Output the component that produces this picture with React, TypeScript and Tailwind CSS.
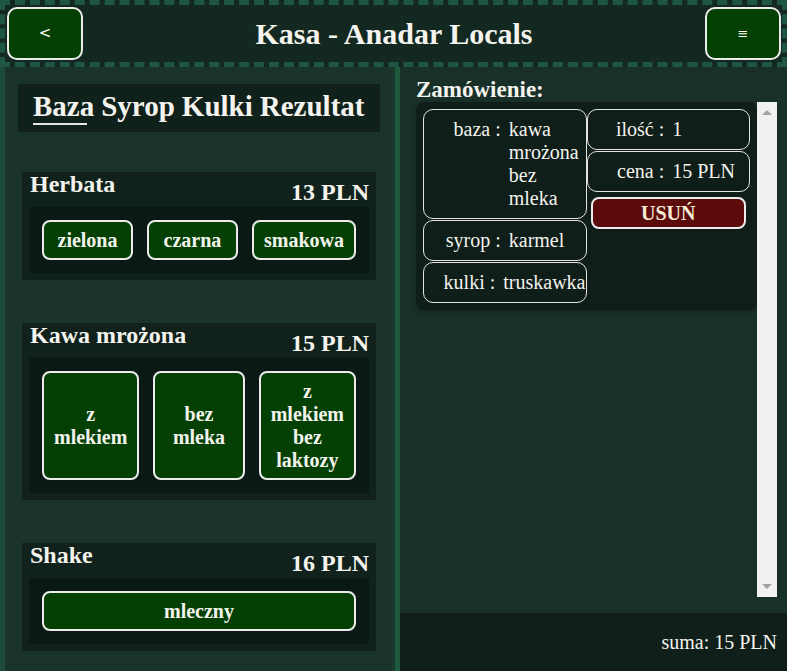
import React from "react";

const serif = "font-['Liberation_Serif','Times_New_Roman',serif]";

interface Product {
  name: string;
  price: string;
  options: string[];
}

const products: Product[] = [
  { name: "Herbata", price: "13 PLN", options: ["zielona", "czarna", "smakowa"] },
  { name: "Kawa mrożona", price: "15 PLN", options: ["z mlekiem", "bez mleka", "z mlekiem bez laktozy"] },
  { name: "Shake", price: "16 PLN", options: ["mleczny"] },
];

const tabs = ["Baza", "Syrop", "Kulki", "Rezultat"];

function ProductCard({ product }: { product: Product }) {
  return (
    <div className="bg-[#10221b] px-[7px] pb-[7px]">
      <div className="flex h-[35px] items-start justify-between">
        <h3 className="ml-px text-[24px] font-bold leading-none">{product.name}</h3>
        <p className="mt-[8px] text-[24px] font-bold leading-none">{product.price}</p>
      </div>
      <div className="flex gap-[14px] bg-[#0a1913] px-[13px] py-[13px]">
        {product.options.map((o) => (
          <button
            key={o}
            className="flex flex-1 basis-0 items-center justify-center rounded-[8px] border-2 border-[#ececec] bg-[#044004] px-[10px] py-[6.5px] text-center text-[20px] font-bold leading-[23px] text-[#f3f3ee]"
          >
            {o}
          </button>
        ))}
      </div>
    </div>
  );
}

function OrderItem({ label, value }: { label: string; value: string }) {
  return (
    <div className="flex rounded-[10px] border border-[#e4e4e4] py-[8px] text-[20px] leading-[23px]">
      <span className="flex-1 basis-0 whitespace-nowrap pr-[4px] text-right">{label} :</span>
      <span className="flex-1 basis-0 pl-[4px] text-left">{value}</span>
    </div>
  );
}

function ScrollArrow({ down }: { down?: boolean }) {
  return (
    <svg width="10" height="6" viewBox="0 0 10 6" className="mx-auto">
      <polygon points={down ? "0,0 10,0 5,5" : "0,6 10,6 5,1"} fill="#a3a3a3" />
    </svg>
  );
}

export default function App() {
  return (
    <div className={`flex h-screen w-full flex-col overflow-hidden bg-[#183028] text-[#f4f3ee] ${serif}`}>
      {/* Header */}
      <header className="flex h-[67px] shrink-0 items-center justify-between border-[5px] border-dashed border-[#1f5643] bg-[#132820] pl-[2px] pr-px">
        <button className="flex h-[53px] w-[76px] items-center justify-center rounded-[10px] border-2 border-[#ececec] bg-[#044004] font-['DejaVu_Sans',sans-serif] text-[15px] text-white">
          &lt;
        </button>
        <h1 className="text-[30px] font-bold">Kasa - Anadar Locals</h1>
        <button className="flex h-[53px] w-[76px] items-center justify-center rounded-[10px] border-2 border-[#ececec] bg-[#044004] font-['DejaVu_Sans',sans-serif] text-[13px] text-white">
          ≡
        </button>
      </header>

      <main className="flex min-h-0 flex-1">
        {/* Left: product picker */}
        <section className="w-[400px] shrink-0 overflow-hidden border-l-[5px] border-r-[5px] border-l-[#1d4a3a] border-r-[#21593f] bg-[#1a342a] pt-[17px] shadow-[inset_-3px_0_0_#1a3a2e]">
          <nav className="ml-[13px] w-[362px] bg-[#10211b] pb-[7px] pl-[15px] pt-[7.5px]">
            <div className="flex items-start gap-[7px]">
              {tabs.map((t, i) => (
                <div key={t} className="flex flex-col">
                  <span className="text-[29px] font-bold leading-none">{t}</span>
                  {i === 0 ? (
                    <span className="mt-[2.5px] h-[2px] w-[54px] bg-[#e6e6e6]" />
                  ) : (
                    <span className="mt-[2.5px] h-[2px]" />
                  )}
                </div>
              ))}
            </div>
          </nav>

          <div className="ml-[17px] mr-[19px] mt-[40px] flex flex-col gap-[43px]">
            {products.map((p) => (
              <ProductCard key={p.name} product={p} />
            ))}
          </div>
        </section>

        {/* Right: order */}
        <section className="flex min-w-0 flex-1 flex-col">
          <div className="flex min-h-0 flex-1 flex-col pl-[16px] pr-[10px] pt-[11px]">
            <h2 className="text-[23px] font-bold leading-none">Zamówienie:</h2>
            <div className="mb-[16px] mt-[1px] flex min-h-0 flex-1">
              <div className="flex-1">
                <div className="grid grid-cols-2 rounded-[8px] bg-[#0f1e19] p-[7px] shadow-[0_2px_4px_rgba(0,0,0,0.25)]">
                  <div className="flex flex-col gap-[1px]">
                    <OrderItem label="baza" value="kawa mrożona bez mleka" />
                    <OrderItem label="syrop" value="karmel" />
                    <OrderItem label="kulki" value="truskawka" />
                  </div>
                  <div className="flex flex-col gap-[1px]">
                    <OrderItem label="ilość" value="1" />
                    <OrderItem label="cena" value="15 PLN" />
                    <button className="mx-[4px] mt-[4px] rounded-[8px] border-2 border-[#ececec] bg-[#5c0b0b] py-[2.5px] text-[20px] font-bold leading-[23px] text-[#f6ecd6]">
                      USUŃ
                    </button>
                  </div>
                </div>
              </div>
              {/* scrollbar */}
              <div className="flex w-[20px] shrink-0 flex-col justify-between bg-[#f1f1f1] py-[7px]">
                <ScrollArrow />
                <ScrollArrow down />
              </div>
            </div>
          </div>
          <footer className="flex h-[58px] shrink-0 items-center justify-end bg-[#111f1a] pr-[10px] text-[20px]">
            suma: 15 PLN
          </footer>
        </section>
      </main>
    </div>
  );
}
